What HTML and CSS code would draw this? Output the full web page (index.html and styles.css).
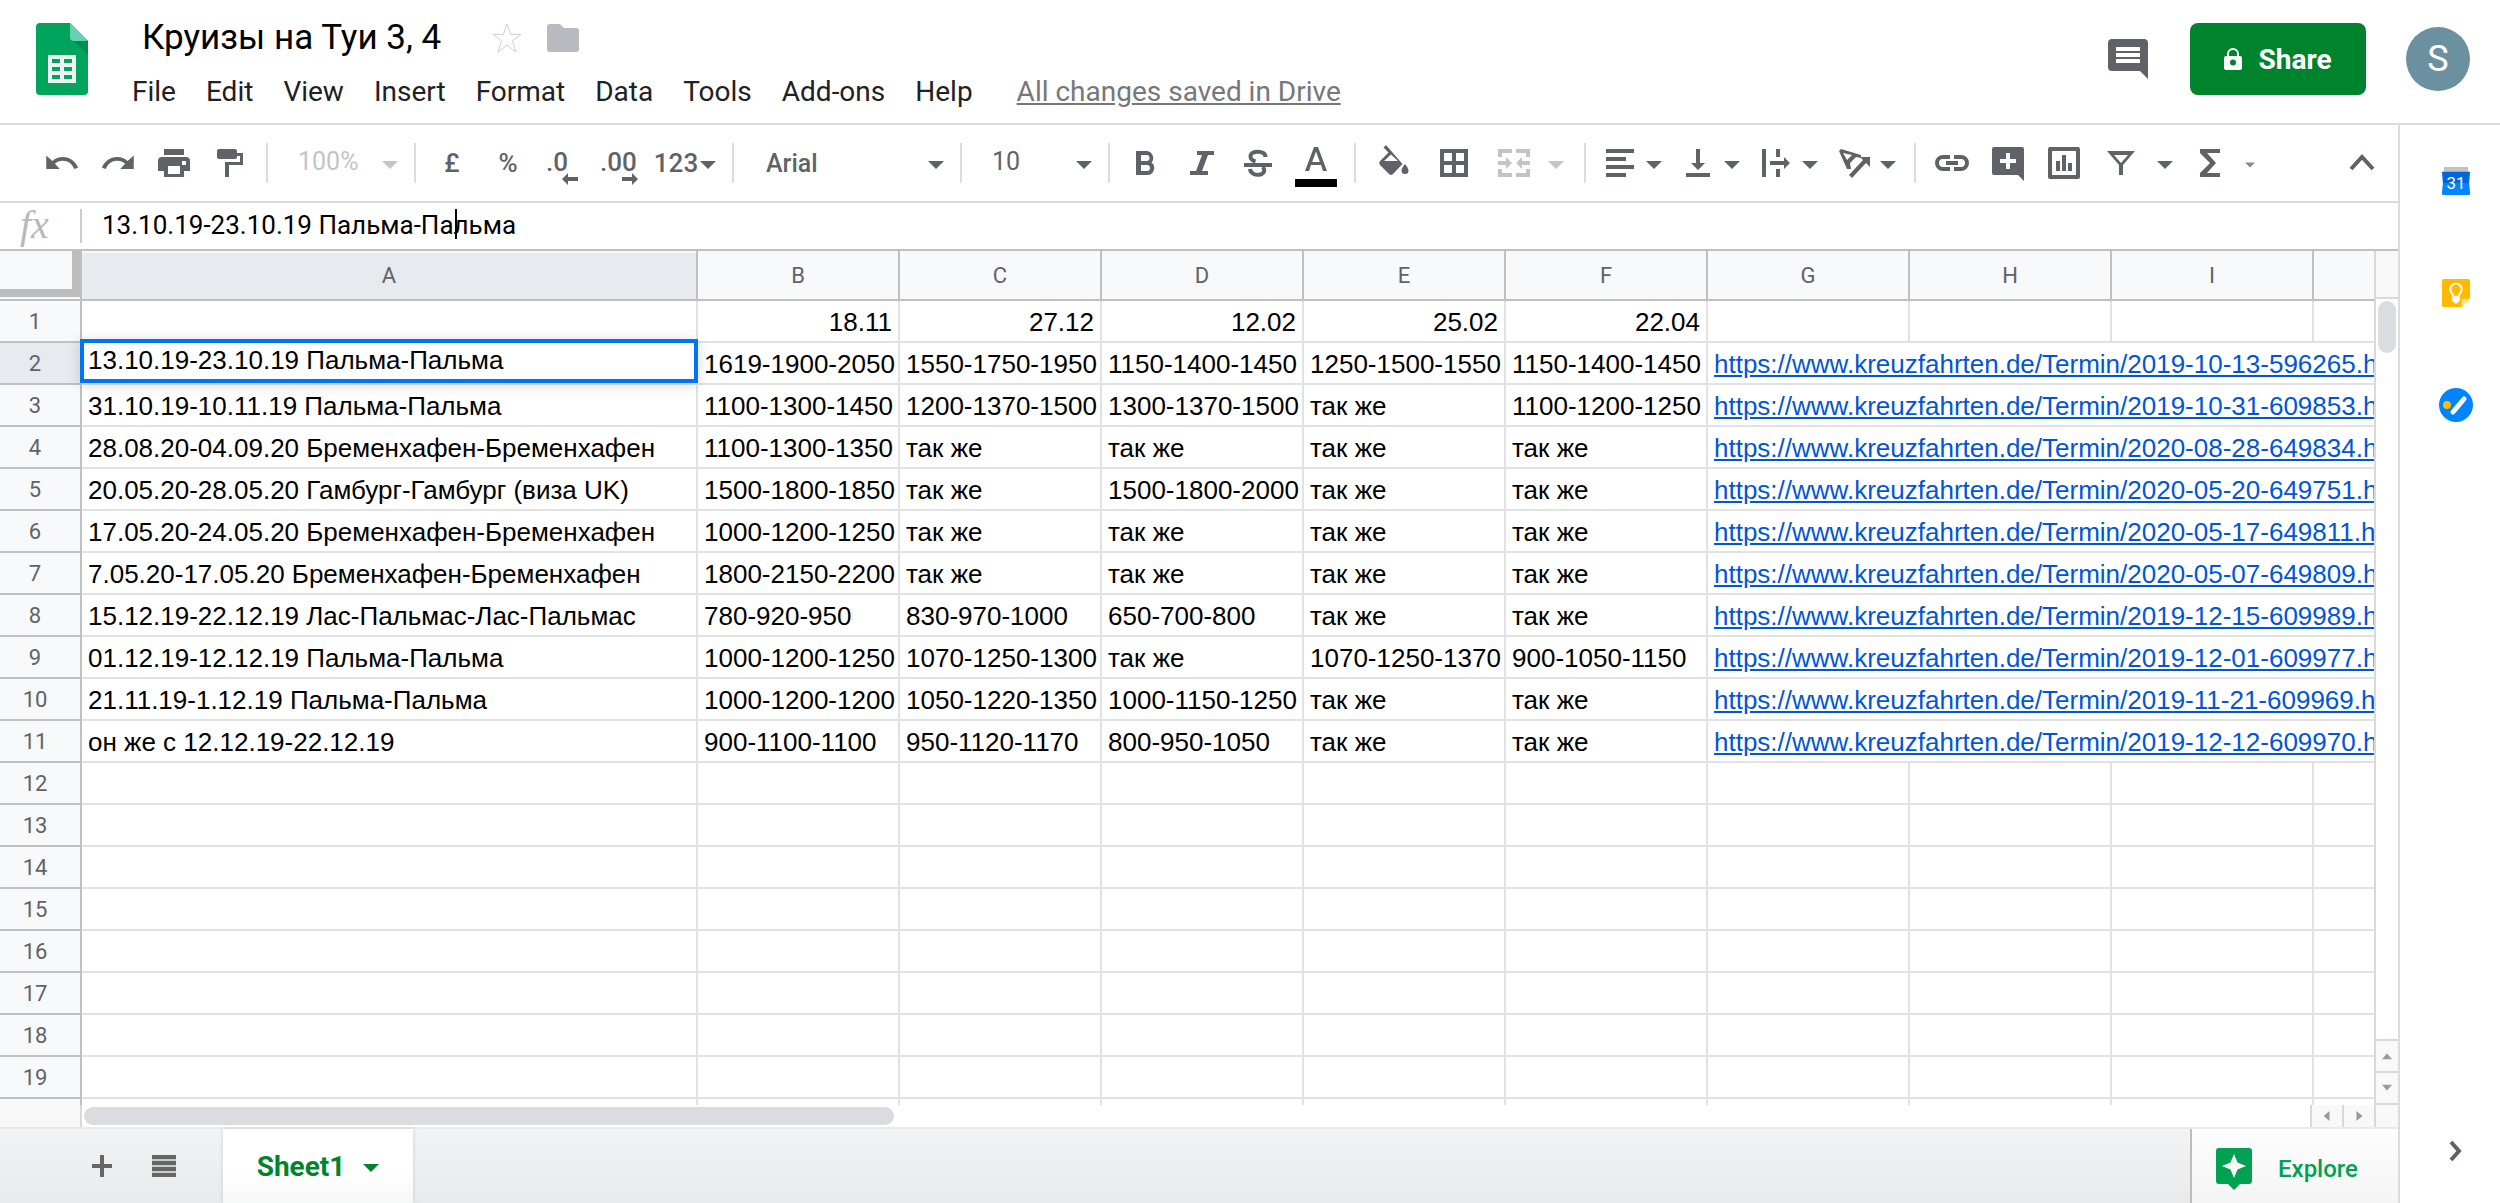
FILE: index.html
```html
<!DOCTYPE html>
<html lang="en">
<head>
<meta charset="utf-8">
<title>Круизы на Туи 3, 4 - Sheets</title>
<link rel="stylesheet" href="styles.css">
</head>
<body>
<svg class="defs" aria-hidden="true">
  <symbol id="caret" viewBox="0 0 16 8"><path d="M0 0h16L8 8z"/></symbol>
</svg>
<div class="app">
  <header class="header">
    <svg class="logo" viewBox="0 0 52 72" aria-label="Sheets">
      <path fill="#00a45d" d="M4 0h30l18 18v50a4 4 0 0 1-4 4H4a4 4 0 0 1-4-4V4a4 4 0 0 1 4-4z"/>
      <path fill="#008f51" d="M37 17h15v15z"/>
      <path fill="#66d1ae" d="M34 0l18 18H38a4 4 0 0 1-4-4z"/>
      <path fill="#f1f1f1" fill-rule="evenodd" d="M12 32h28v28H12zM16 36v4h8v-4zM28 36v4h8v-4zM16 44v4h8v-4zM28 44v4h8v-4zM16 52v4h8v-4zM28 52v4h8v-4z"/>
    </svg>
    <div class="heading">
      <div class="title-row">
        <h1 class="title">Круизы на Туи 3, 4</h1>
        <button class="plain" aria-label="Star"><svg class="star" viewBox="0 0 32 32"><path d="M16 2l3.6 10.300H30l-8.500 6.600L25 30l-9-6.900L7 30l3.500-11.100L2 12.300h10.400z"/></svg></button>
        <button class="plain" aria-label="Move to folder"><svg class="folder" viewBox="0 0 32 28"><path d="M3 0h10l4 4h12a3 3 0 0 1 3 3v18a3 3 0 0 1-3 3H3a3 3 0 0 1-3-3V3a3 3 0 0 1 3-3z"/></svg></button>
      </div>
      <nav class="menu">
        <button>File</button><button>Edit</button><button>View</button><button>Insert</button><button>Format</button><button>Data</button><button>Tools</button><button>Add-ons</button><button>Help</button>
        <a class="saved" href="#">All changes saved in Drive</a>
      </nav>
    </div>
    <div class="account">
      <button class="plain" aria-label="Comments"><svg class="comments" viewBox="0 0 40 40"><path fill-rule="evenodd" d="M4 0h32a4 4 0 0 1 4 4v36l-8-8H4a4 4 0 0 1-4-4V4a4 4 0 0 1 4-4zM8 8v4h24V8zM8 14v4h24v-4zM8 20v4h24v-4z"/></svg></button>
      <button class="share"><svg class="lock" viewBox="0 0 18 24"><path fill-rule="evenodd" d="M2 9h1V7a6 6 0 0 1 12 0v2h1a2 2 0 0 1 2 2v10a2 2 0 0 1-2 2H2a2 2 0 0 1-2-2V11a2 2 0 0 1 2-2zM5 9h8V7a4 4 0 0 0-8 0zM9 12.500a3 3 0 1 0 0 6 3 3 0 0 0 0-6z"/></svg>Share</button>
      <button class="avatar" aria-label="Account">S</button>
    </div>
  </header>

  <div class="workspace">
    <main class="editor">
      <div class="toolbar" role="toolbar">
        <button class="tool" aria-label="Undo"><svg viewBox="0 0 24 24"><path d="M12.500 8c-2.650 0-5.050.990-6.900 2.600L1.500 7v9h9l-3.300-3.620c1.390-1.160 3.340-1.880 5.300-1.880 3.540 0 6.550 2.310 7.600 5.500l2.600-.780C21.300 11.030 17.150 8 12.500 8z"/></svg></button>
        <button class="tool" aria-label="Redo"><svg viewBox="0 0 24 24"><path d="M11.500 8c2.650 0 5.050.990 6.900 2.600L22.500 7v9h-9l3.300-3.620c-1.390-1.160-3.340-1.880-5.300-1.880-3.540 0-6.550 2.310-7.600 5.500l-2.600-.780C2.700 11.030 6.850 8 11.500 8z"/></svg></button>
        <button class="tool" aria-label="Print"><svg viewBox="0 0 36 36"><path fill-rule="evenodd" d="M8 4h20v6H8zM6 12h24a4 4 0 0 1 4 4v10h-6v6H8v-6H2V16a4 4 0 0 1 4-4zM12 21v8h12v-8zM26 16v4h4v-4z"/></svg></button>
        <button class="tool" aria-label="Paint format"><svg viewBox="0 0 36 36"><path d="M7 4h16a2 2 0 0 1 2 2v2h6v12H17v12h-4V17h15v-6h-3v1a2 2 0 0 1-2 2H7a2 2 0 0 1-2-2V6a2 2 0 0 1 2-2z"/></svg></button>
        <span class="sep"></span>
        <label class="picker picker-zoom"><select aria-label="Zoom" disabled><option>100%</option></select><svg class="caret"><use href="#caret"/></svg></label>
        <span class="sep"></span>
        <button class="tool">£</button>
        <button class="tool">%</button>
        <button class="tool" aria-label="Decrease decimal places"><svg class="decimal" viewBox="0 0 40 40"><text x="2" y="28">.0</text><path d="M18 36l6-6v4h10v4H24v4z"/></svg></button>
        <button class="tool" aria-label="Increase decimal places"><svg class="decimal" viewBox="0 0 40 40"><text x="0" y="28">.00</text><path d="M38 36l-6-6v4H22v4h10v4z"/></svg></button>
        <button class="tool tool-123">123<svg class="caret"><use href="#caret"/></svg></button>
        <span class="sep"></span>
        <label class="picker picker-font"><select aria-label="Font"><option>Arial</option></select><svg class="caret"><use href="#caret"/></svg></label>
        <span class="sep"></span>
        <label class="picker picker-zoom"><select aria-label="Font size"><option>10</option></select><svg class="caret"><use href="#caret"/></svg></label>
        <span class="sep"></span>
        <button class="tool" aria-label="Bold"><svg viewBox="0 0 36 36"><path fill-rule="evenodd" d="M8 6h11a7 7 0 0 1 4.500 11.500A7 7 0 0 1 19.500 30H8zM13 10v6h5.500a3 3 0 0 0 0-6zM13 20v6h6a3 3 0 0 0 0-6z"/></svg></button>
        <button class="tool" aria-label="Italic"><svg viewBox="0 0 36 36"><path d="M13 6h17v4h-6l-6 16h6v4H6v-4h6l6-16h-5z"/></svg></button>
        <button class="tool" aria-label="Strikethrough"><svg viewBox="0 0 36 36"><path d="M4 18h28v4H4z"/><path fill="none" stroke="currentColor" stroke-width="4" d="M25.500 12c0-7-15-7-15-.500 0 3 2 4 5 5M23 22c6 9-12 11-13 2"/></svg></button>
        <button class="tool tool-color" aria-label="Text color"><svg class="letter" viewBox="0 0 44 44"><path fill-rule="evenodd" d="M20 6h4l9 24h-4l-2-6H17l-2 6h-4zM22 10.500L18.200 21h7.600z"/><path fill="#000" d="M1 38h42v8H1z"/></svg></button>
        <span class="sep"></span>
        <button class="tool tool-wide" aria-label="Fill color"><svg viewBox="0 0 36 36"><path fill-rule="evenodd" d="M10 0l-2.500 2.500 5 5L4 16a3 3 0 0 0 0 4l9 9a3 3 0 0 0 4 0L26.500 19zM8 16l7-6.500 7 6.500zM29 19s-3.500 4-3.500 6.500a3.500 3.500 0 0 0 7 0C32.500 23 29 19 29 19z"/></svg></button>
        <button class="tool tool-wide" aria-label="Borders"><svg viewBox="0 0 36 36"><path fill-rule="evenodd" d="M4 4h28v28H4zM8 8v8h8V8zM20 8v8h8V8zM8 20v8h8v-8zM20 20v8h8v-8z"/></svg></button>
        <button class="tool tool-wide" aria-label="Merge cells" disabled><svg viewBox="0 0 36 36"><path d="M2 4h14v4H6v4H2zM20 4h14v8h-4V8H20zM2 24h4v4h10v4H2zM30 24h4v8H20v-4h10zM2 16h8v-4l6 6-6 6v-4H2zM34 16h-8v-4l-6 6 6 6v-4h8z"/></svg></button>
        <button class="tool tool-tiny" aria-label="Merge type" disabled><svg class="caret"><use href="#caret"/></svg></button>
        <span class="sep sep-far"></span>
        <button class="tool tool-drop" aria-label="Horizontal align"><svg viewBox="0 0 36 36"><path d="M4 4h28v4H4zM4 12h20v4H4zM4 20h28v4H4zM4 28h20v4H4z"/></svg><svg class="caret"><use href="#caret"/></svg></button>
        <button class="tool tool-drop" aria-label="Vertical align"><svg viewBox="0 0 36 36"><path d="M16 4h4v14h5l-7 7-7-7h5zM6 28h24v4H6z"/></svg><svg class="caret"><use href="#caret"/></svg></button>
        <button class="tool tool-drop" aria-label="Text wrapping"><svg viewBox="0 0 36 36"><path d="M4 4h4v28H4zM18 4h4v8h-4zM18 24h4v8h-4zM12 16h14v-4l6 6-6 6v-4H12z"/></svg><svg class="caret"><use href="#caret"/></svg></button>
        <button class="tool tool-drop" aria-label="Text rotation"><svg viewBox="0 0 36 36"><path fill-rule="evenodd" d="M3 6l2-2 20 6v3l-5-1-6 6 1 6h-4zM7 8l4 7 5-5z"/><path d="M13 30l14-15-3-3h10v10l-4-4-14 15z"/></svg><svg class="caret"><use href="#caret"/></svg></button>
        <span class="sep"></span>
        <button class="tool" aria-label="Insert link"><svg viewBox="0 0 36 36"><path d="M12 16h12v4H12zM16 10v4H9a4 4 0 0 0 0 8h7v4H9A8 8 0 0 1 9 10zM20 10v4h7a4 4 0 0 1 0 8h-7v4h7a8 8 0 0 0 0-16z"/></svg></button>
        <button class="tool" aria-label="Insert comment"><svg viewBox="0 0 36 36"><path fill-rule="evenodd" d="M4 2h28a2 2 0 0 1 2 2v32l-6-6H4a2 2 0 0 1-2-2V4a2 2 0 0 1 2-2zM16 8v6h-6v4h6v6h4v-6h6v-4h-6V8z"/></svg></button>
        <button class="tool" aria-label="Insert chart"><svg viewBox="0 0 36 36"><path fill-rule="evenodd" d="M4 2h28a2 2 0 0 1 2 2v28a2 2 0 0 1-2 2H4a2 2 0 0 1-2-2V4a2 2 0 0 1 2-2zM6 6v24h24V6zM10 16h4v10h-4zM16 10h4v16h-4zM22 18h4v8h-4z"/></svg></button>
        <button class="tool" aria-label="Create filter"><svg viewBox="0 0 36 36"><path fill-rule="evenodd" d="M5 6h28L21 20v10h-4V20zM12 10l7 8 7-8z"/></svg></button>
        <button class="tool tool-narrow" aria-label="Filter views"><svg class="caret"><use href="#caret"/></svg></button>
        <button class="tool" aria-label="Functions"><svg viewBox="0 0 36 36"><path d="M8 4h20v4H15l9 10-9 10h13v4H8v-4l10-10L8 8z"/></svg></button>
        <button class="tool tool-tiny" aria-label="Function list"><svg class="caret caret-small"><use href="#caret"/></svg></button>
        <button class="tool tool-end" aria-label="Hide the menus"><svg viewBox="0 0 36 36"><path fill="none" stroke="currentColor" stroke-width="4" d="M7 24l11-12 11 12"/></svg></button>
      </div>

      <div class="formula">
        <span class="fx">fx</span>
        <div class="formula-field"><input type="text" aria-label="Formula" value="13.10.19-23.10.19 Пальма-Пальма"><span class="text-cursor"></span></div>
      </div>

      <div class="grid">
        <div class="cells">
          <table class="sheet">
            <colgroup><col class="c-head"><col class="c-a"><col><col><col><col><col><col><col><col><col></colgroup>
            <thead><tr><th class="corner"></th><th class="on">A</th><th>B</th><th>C</th><th>D</th><th>E</th><th>F</th><th>G</th><th>H</th><th>I</th><th></th></tr></thead>
            <tbody>
              <tr><th>1</th><td></td><td class="num">18.11</td><td class="num">27.12</td><td class="num">12.02</td><td class="num">25.02</td><td class="num">22.04</td><td></td><td></td><td></td><td></td></tr>
              <tr><th class="on">2</th><td class="active"><input class="cell-editor" aria-label="A2" value="13.10.19-23.10.19 Пальма-Пальма"></td><td>1619-1900-2050</td><td>1550-1750-1950</td><td>1150-1400-1450</td><td>1250-1500-1550</td><td>1150-1400-1450</td><td colspan="4"><a href="#">https://www.kreuzfahrten.de/Termin/2019-10-13-596265.html</a></td></tr>
              <tr><th>3</th><td>31.10.19-10.11.19 Пальма-Пальма</td><td>1100-1300-1450</td><td>1200-1370-1500</td><td>1300-1370-1500</td><td>так же</td><td>1100-1200-1250</td><td colspan="4"><a href="#">https://www.kreuzfahrten.de/Termin/2019-10-31-609853.html</a></td></tr>
              <tr><th>4</th><td>28.08.20-04.09.20 Бременхафен-Бременхафен</td><td>1100-1300-1350</td><td>так же</td><td>так же</td><td>так же</td><td>так же</td><td colspan="4"><a href="#">https://www.kreuzfahrten.de/Termin/2020-08-28-649834.html</a></td></tr>
              <tr><th>5</th><td>20.05.20-28.05.20 Гамбург-Гамбург (виза UK)</td><td>1500-1800-1850</td><td>так же</td><td>1500-1800-2000</td><td>так же</td><td>так же</td><td colspan="4"><a href="#">https://www.kreuzfahrten.de/Termin/2020-05-20-649751.html</a></td></tr>
              <tr><th>6</th><td>17.05.20-24.05.20 Бременхафен-Бременхафен</td><td>1000-1200-1250</td><td>так же</td><td>так же</td><td>так же</td><td>так же</td><td colspan="4"><a href="#">https://www.kreuzfahrten.de/Termin/2020-05-17-649811.html</a></td></tr>
              <tr><th>7</th><td>7.05.20-17.05.20 Бременхафен-Бременхафен</td><td>1800-2150-2200</td><td>так же</td><td>так же</td><td>так же</td><td>так же</td><td colspan="4"><a href="#">https://www.kreuzfahrten.de/Termin/2020-05-07-649809.html</a></td></tr>
              <tr><th>8</th><td>15.12.19-22.12.19 Лас-Пальмас-Лас-Пальмас</td><td>780-920-950</td><td>830-970-1000</td><td>650-700-800</td><td>так же</td><td>так же</td><td colspan="4"><a href="#">https://www.kreuzfahrten.de/Termin/2019-12-15-609989.html</a></td></tr>
              <tr><th>9</th><td>01.12.19-12.12.19 Пальма-Пальма</td><td>1000-1200-1250</td><td>1070-1250-1300</td><td>так же</td><td>1070-1250-1370</td><td>900-1050-1150</td><td colspan="4"><a href="#">https://www.kreuzfahrten.de/Termin/2019-12-01-609977.html</a></td></tr>
              <tr><th>10</th><td>21.11.19-1.12.19 Пальма-Пальма</td><td>1000-1200-1200</td><td>1050-1220-1350</td><td>1000-1150-1250</td><td>так же</td><td>так же</td><td colspan="4"><a href="#">https://www.kreuzfahrten.de/Termin/2019-11-21-609969.html</a></td></tr>
              <tr><th>11</th><td>он же с 12.12.19-22.12.19</td><td>900-1100-1100</td><td>950-1120-1170</td><td>800-950-1050</td><td>так же</td><td>так же</td><td colspan="4"><a href="#">https://www.kreuzfahrten.de/Termin/2019-12-12-609970.html</a></td></tr>
              <tr><th>12</th><td></td><td></td><td></td><td></td><td></td><td></td><td></td><td></td><td></td><td></td></tr>
              <tr><th>13</th><td></td><td></td><td></td><td></td><td></td><td></td><td></td><td></td><td></td><td></td></tr>
              <tr><th>14</th><td></td><td></td><td></td><td></td><td></td><td></td><td></td><td></td><td></td><td></td></tr>
              <tr><th>15</th><td></td><td></td><td></td><td></td><td></td><td></td><td></td><td></td><td></td><td></td></tr>
              <tr><th>16</th><td></td><td></td><td></td><td></td><td></td><td></td><td></td><td></td><td></td><td></td></tr>
              <tr><th>17</th><td></td><td></td><td></td><td></td><td></td><td></td><td></td><td></td><td></td><td></td></tr>
              <tr><th>18</th><td></td><td></td><td></td><td></td><td></td><td></td><td></td><td></td><td></td><td></td></tr>
              <tr><th>19</th><td></td><td></td><td></td><td></td><td></td><td></td><td></td><td></td><td></td><td></td></tr>
              <tr><th></th><td></td><td></td><td></td><td></td><td></td><td></td><td></td><td></td><td></td><td></td></tr>
            </tbody>
          </table>
        </div>
        <div class="vscroll">
          <div class="vscroll-head"></div>
          <div class="vscroll-track"><div class="vthumb"></div></div>
          <button class="step step-v" aria-label="Scroll up"><svg class="arrow" viewBox="0 0 12 12"><path d="M0 10h12L6 3z"/></svg></button>
          <button class="step step-v" aria-label="Scroll down"><svg class="arrow" viewBox="0 0 12 12"><path d="M0 2h12L6 9z"/></svg></button>
        </div>
        <div class="hscroll">
          <div class="hscroll-head"></div>
          <div class="hscroll-track"><div class="hthumb"></div></div>
          <button class="step step-h" aria-label="Scroll left"><svg class="arrow" viewBox="0 0 12 12"><path d="M9 0v12L2 6z"/></svg></button>
          <button class="step step-h" aria-label="Scroll right"><svg class="arrow" viewBox="0 0 12 12"><path d="M3 0v12l7-6z"/></svg></button>
        </div>
        <div class="scroll-corner"></div>
      </div>

      <footer class="tabs">
        <button class="tab-tool" aria-label="Add sheet"><svg class="tab-icon" viewBox="0 0 24 24"><path d="M10 1h4v9h8v4h-8v9h-4v-9H2v-4h8z"/></svg></button>
        <button class="tab-tool" aria-label="All sheets"><svg class="tab-icon" viewBox="0 0 24 24"><path fill="#c9cccc" d="M0 1h24v22H0z"/><path d="M0 1h24v4H0zM0 7h24v4H0zM0 13h24v4H0zM0 19h24v4H0z"/></svg></button>
        <button class="tab">Sheet1<svg class="caret"><use href="#caret"/></svg></button>
        <button class="explore"><svg class="explore-icon" viewBox="0 0 36 42"><path fill-rule="evenodd" d="M3 0h30a3 3 0 0 1 3 3v30a3 3 0 0 1-3 3h-9l-6 6-6-6H3a3 3 0 0 1-3-3V3a3 3 0 0 1 3-3zM18 6l-3.500 8.500L6 18l8.500 3.500L18 30l3.500-8.500L30 18l-8.500-3.500z"/></svg>Explore</button>
      </footer>
    </main>

    <aside class="side">
      <button class="side-button" aria-label="Calendar"><svg class="side-icon" viewBox="0 0 32 32"><path fill="#c2c2c2" d="M3 1h26v6H3z"/><path fill="#0066da" d="M1 6h30l-1 12H2z"/><path fill="#0084ff" d="M2 18h28l1 11a2 2 0 0 1-2 2H3a2 2 0 0 1-2-2z"/><text class="date" x="16" y="25">31</text></svg></button>
      <button class="side-button" aria-label="Keep"><svg class="side-icon" viewBox="0 0 32 32"><path fill="#ffba00" d="M3 1h26a2 2 0 0 1 2 2v19l-9 9H3a2 2 0 0 1-2-2V3a2 2 0 0 1 2-2z"/><path fill="#ffe083" d="M31 22l-9 9v-9z"/><path fill="none" stroke="#fff" stroke-width="2" d="M13 20c0-3-3-4-3-8a6 6 0 0 1 12 0c0 4-3 5-3 8z"/><path fill="#fff" d="M12 21h8v4h-2v2h-4v-2h-2z"/></svg></button>
      <button class="side-button" aria-label="Tasks"><svg class="side-icon tasks" viewBox="0 0 34 34"><circle cx="17" cy="17" r="17" fill="#0084ff"/><circle cx="8" cy="17" r="4" fill="#ffba00"/><path stroke="#fff" stroke-width="5" stroke-linecap="round" d="M14 24l11-13"/></svg></button>
      <button class="side-button side-toggle" aria-label="Hide side panel"><svg class="chevron" viewBox="0 0 16 24"><path fill="none" stroke="#5f6368" stroke-width="4" d="M3 3l8 9-8 9"/></svg></button>
    </aside>
  </div>
</div>
</body>
</html>
```
FILE: styles.css
```css
* { box-sizing: border-box; }
body { margin: 0; background: #fff; color: #000; font-family: Roboto, "Liberation Sans", sans-serif; }
button, select, input { margin: 0; padding: 0; border: 0; background: none; color: inherit; font: inherit; }
svg { flex: none; fill: currentColor; }
.defs { display: none; }

.app { display: flex; flex-direction: column; height: 100vh; overflow: hidden; }

.header { display: flex; align-items: center; height: 125px; flex: none; padding: 0 30px 5px 36px; border-bottom: 2px solid #dadce0; }
.logo { width: 52px; height: 72px; }
.heading { align-self: flex-start; padding: 16px 0 0 44px; }
.title-row { display: flex; align-items: center; height: 44px; padding-left: 10px; }
.title { margin: 0 50px 0 0; font-size: 35px; font-weight: 400; line-height: 44px; white-space: nowrap; }
.plain { display: flex; }
.star { width: 32px; height: 32px; margin-right: 24px; fill: none; stroke: #d0d0d0; stroke-width: 1; }
.folder { width: 32px; height: 28px; color: #b9babf; }
.menu { display: flex; gap: 30px; margin-top: 10px; font-size: 28px; line-height: 44px; color: #202124; white-space: nowrap; }
.saved { margin-left: 14px; color: #777; }
.account { display: flex; align-items: center; gap: 40px; margin-left: auto; }
.comments { width: 40px; height: 40px; }
.account .plain { margin-right: 2px; color: #5f6368; }
.share { display: flex; align-items: center; justify-content: center; gap: 16px; width: 176px; height: 72px; border-radius: 8px; background: #00832d; color: #fff; font-size: 28px; font-weight: 700; }
.lock { width: 18px; height: 24px; }
.avatar { width: 64px; height: 64px; border-radius: 50%; background: #6b909f; color: #fff; font-size: 36px; }

.workspace { display: flex; flex: 1; min-height: 0; }
.editor { display: flex; flex-direction: column; flex: 1; min-width: 0; }

.toolbar { display: flex; align-items: center; height: 78px; flex: none; padding: 0 8px 0 34px; border-bottom: 2px solid #dadce0; color: #5f6368; }
.tool { display: flex; align-items: center; justify-content: center; flex: none; width: 56px; height: 56px; font-size: 26px; font-weight: 500; color: #5f6368; }
.tool svg { width: 36px; height: 36px; }
.tool:disabled, .picker:has(:disabled) { color: #c4c4c4; }
.toolbar .caret, .tab .caret { width: 16px; height: 8px; margin-top: 4px; }
.toolbar .caret-small { width: 10px; height: 6px; color: #8a8a8a; }
.toolbar .decimal { width: 40px; height: 40px; overflow: visible; }
.decimal text { font-size: 26px; font-weight: 500; }
.tool-123 { width: 76px; gap: 2px; padding-right: 2px; }
.tool-color { width: 60px; }
.toolbar .letter { width: 44px; height: 44px; overflow: visible; }
.tool-wide { width: 60px; }
.tool-narrow { width: 34px; }
.tool-tiny { width: 24px; }
.tool-drop { width: 78px; padding-left: 8px; gap: 8px; justify-content: flex-start; }
.tool-end { margin-left: auto; }
.sep { width: 2px; height: 40px; margin: 0 8px; flex: none; background: #dadce0; }
.sep-far { margin-left: 16px; }
.picker { display: grid; align-items: center; flex: none; height: 56px; }
.picker > * { grid-area: 1 / 1; }
.picker select { appearance: none; width: 100%; height: 100%; padding: 0 0 4px 22px; font-size: 25px; opacity: 1; }
.picker .caret { justify-self: end; margin-right: 8px; }
.picker-zoom { width: 130px; }
.picker-font { width: 210px; font-weight: 500; }
.picker-font select { padding: 0 0 0 24px; }

.formula { display: flex; align-items: center; height: 48px; flex: none; border-bottom: 2px solid #c0c0c0; }
.fx { width: 82px; height: 34px; border-right: 2px solid #ccc; padding-left: 20px; font: italic 40px/32px "Liberation Serif", serif; color: #b8b8b8; }
.formula-field { position: relative; flex: 1; padding-left: 20px; }
.formula-field input { display: block; width: 100%; height: 44px; padding-bottom: 2px; font-size: 26px; outline: 0; }
.text-cursor { position: absolute; top: 5px; left: 373px; width: 2px; height: 30px; background: #000; }

.grid { display: grid; grid-template-columns: 1fr 24px; grid-template-rows: 1fr 22px; flex: 1; min-height: 0; border-bottom: 2px solid #e8eaed; }
.cells { overflow: hidden; min-width: 0; min-height: 0; }
.sheet { width: 2516px; table-layout: fixed; border-collapse: separate; border-spacing: 0; font: 26px/38px "Liberation Sans", Arial, sans-serif; }
.c-head { width: 82px; }
.c-a { width: 616px; }
.sheet th { height: 42px; padding: 2px 0 0; border: solid #c0c0c0; border-width: 0 2px 2px 0; background: #f8f9fb; color: #5f6368; font: 400 22px/38px Roboto, sans-serif; }
.sheet tbody th { padding-right: 10px; }
.sheet thead th { height: 50px; line-height: 46px; }
.sheet th.on { background: #e7eaee; }
.sheet thead .on { box-shadow: inset 0 2px #f8f9fb; }
.sheet thead .corner { box-shadow: inset 0 -2px #f8f9fb, inset -8px -10px #bdbdbd; }
.sheet td { height: 42px; padding: 2px 6px 0; border: solid #e2e2e2; border-width: 0 2px 2px 0; white-space: nowrap; }
.sheet .num { text-align: right; }
.sheet a { color: #0056d6; }
.sheet .active { position: relative; }
.cell-editor { position: absolute; top: -4px; left: -2px; width: calc(100% + 4px); height: 44px; padding: 0 4px 2px; border: 4px solid #0075f2; background: #fff; box-shadow: 0 2px 14px rgba(60, 64, 67, .2); outline: 0; }

.vscroll { display: flex; flex-direction: column; border: solid #d9d9d9; border-width: 0 0 2px 2px; }
.vscroll-head { height: 48px; background: #f8f8f8; border-bottom: 2px solid #d9d9d9; }
.vscroll-track { flex: 1; padding: 2px; }
.vthumb { height: 52px; border-radius: 9px; background: #dadce0; }
.step { display: flex; align-items: center; justify-content: center; background: #f8f8f8; color: #999; }
.step-v { height: 32px; border-top: 2px solid #d9d9d9; }
.arrow { width: 10px; height: 10px; }
.hscroll { display: flex; }
.hscroll-head { width: 82px; background: #f8f8f8; border-right: 2px solid #d9d9d9; }
.hscroll-track { flex: 1; padding: 2px; }
.hthumb { width: 810px; max-width: 100%; height: 18px; border-radius: 9px; background: #dadce0; }
.step-h { width: 32px; border-left: 2px solid #d9d9d9; }
.scroll-corner { border-left: 2px solid #d9d9d9; background: #f8f8f8; }

.tabs { display: flex; height: 74px; flex: none; padding-left: 71px; background: linear-gradient(#f1f3f4, #e8eaeb); }
.tab-tool { display: flex; align-items: center; justify-content: center; width: 62px; color: #666; }
.tab-icon { width: 24px; height: 24px; }
.tab { display: flex; align-items: center; justify-content: center; gap: 18px; width: 190px; margin-left: 28px; background: linear-gradient(#fff 60%, #f7f8f8); box-shadow: 0 0 4px #c8ccd0; color: #00832d; font-size: 28px; font-weight: 700; }
.explore { display: flex; align-items: center; gap: 26px; width: 208px; margin-left: auto; padding: 6px 0 0 24px; border-left: 2px solid #bdbdbd; background: linear-gradient(#fdfdfe, #f5f5f6); color: #00a152; font-size: 24px; font-weight: 500; }
.explore-icon { width: 36px; height: 42px; }

.side { display: flex; flex-direction: column; width: 102px; padding-left: 12px; border-left: 2px solid #dadce0; }
.side-button { display: flex; align-items: center; justify-content: center; height: 112px; }
.side-icon { width: 30px; height: 30px; }
.tasks { width: 34px; height: 34px; }
.date { fill: #fff; font-size: 18px; text-anchor: middle; }
.side-toggle { height: 104px; margin-top: auto; }
.chevron { width: 16px; height: 24px; }
```
